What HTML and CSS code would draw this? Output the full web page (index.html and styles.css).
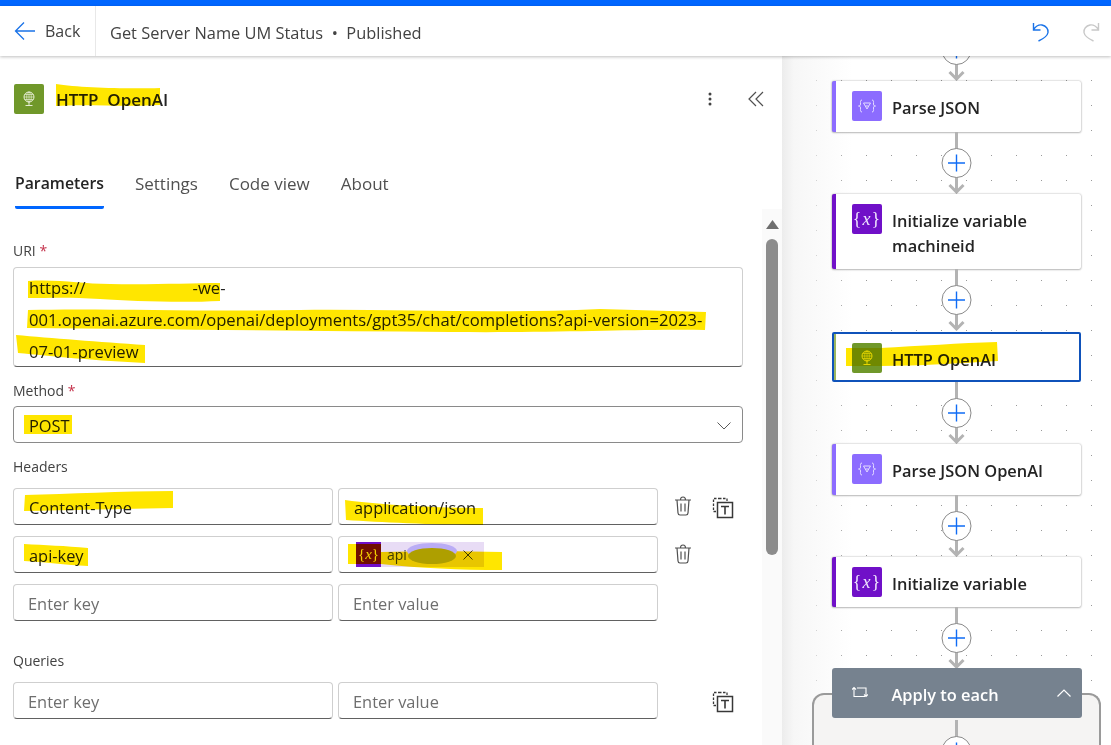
FILE: index.html
```html
<!DOCTYPE html>
<html lang="en">
<head>
    <meta charset="UTF-8">
    <meta name="viewport" content="width=device-width, initial-scale=1.0">
    <title>Get Server Name UM Status</title>
    <link rel="stylesheet" href="styles.css">
</head>
<body>
    <svg class="defs" width="0" height="0">
        <symbol id="connector" viewBox="0 0 31 62">
            <path d="M15.500 0V59" stroke="#b3b3b3" stroke-width="3"/>
            <path d="M8.500 53L15.500 60L22.500 53" fill="none" stroke="#b3b3b3" stroke-width="3"/>
            <circle cx="15.500" cy="31" r="14.500" fill="#fff" stroke="#8a8a8a"/>
            <path d="M7 31H24M15.500 22.500V39.500" stroke="#0f6cf5" stroke-width="1.400"/>
        </symbol>
        <symbol id="braces-filter" viewBox="0 0 30 30">
            <path d="M10 9C8 9 8.500 11 8.500 13C8.500 14.500 8 15 6.500 15C8 15 8.500 15.500 8.500 17C8.500 19 8 21 10 21M20 9C22 9 21.500 11 21.500 13C21.500 14.500 22 15 23.500 15C22 15 21.500 15.500 21.500 17C21.500 19 22 21 20 21" fill="none" stroke="#e4dcff"/>
            <path d="M11.500 12H18.500L15 18Z" fill="none" stroke="#e4dcff"/>
            <path d="M13.500 15H16.500" stroke="#e4dcff"/>
        </symbol>
        <symbol id="globe" viewBox="0 0 30 30">
            <circle cx="15" cy="13" r="5" fill="none" stroke="#f3f6e6" stroke-width=".9"/>
            <path d="M10 13H20M15 8V18M10.800 10.500H19.200M10.800 15.500H19.200" stroke="#f3f6e6" stroke-width=".6"/>
            <ellipse cx="15" cy="13" rx="2.300" ry="5" fill="none" stroke="#f3f6e6" stroke-width=".6"/>
            <path d="M15 18V21M11.500 21.500H18.500" stroke="#f3f6e6" stroke-width=".9"/>
        </symbol>
        <symbol id="trash" viewBox="0 0 18 20">
            <path d="M1 4H17M6.500 4C6.500 1.500 7.500 1 9 1C10.500 1 11.500 1.500 11.500 4M3 4L4 17C4.100 18.300 5 19 6 19H12C13 19 13.900 18.300 14 17L15 4M7 7.500V15.500M11 7.500V15.500" fill="none" stroke="#505050" stroke-width="1.200"/>
        </symbol>
        <symbol id="copy-text" viewBox="0 0 22 22">
            <path d="M7 1.500H15V4M1.500 13V1.500H7M1.500 14.500H5" fill="none" stroke="#383838" stroke-width="1.300" stroke-dasharray="2.500 1.500"/>
            <rect x="5.500" y="5.500" width="15" height="15" fill="none" stroke="#383838" stroke-width="1.500"/>
            <path d="M9 9.500H17M13 9.500V17.500" fill="none" stroke="#383838" stroke-width="1.600"/>
        </symbol>
    </svg>

    <div class="top-strip"></div>

    <header class="command-bar">
        <div class="back">
            <svg class="back-icon" width="22" height="20" viewBox="0 0 22 20"><path d="M21 10H2M10 1.500L1.500 10L10 18.500" fill="none" stroke="#1a73e8" stroke-width="1.300"/></svg>
            <span>Back</span>
        </div>
        <div class="flow-title">Get Server Name UM Status &nbsp;•&nbsp; Published</div>
        <div class="history">
            <svg width="18" height="20" viewBox="0 0 18 20"><path d="M1.500 1V8H8.500M1.500 7.500C4 4 7 2.500 10 3C14 3.800 16.500 7 16 10.500C15.600 13 13 16 6.500 19" fill="none" stroke="#1a73e8" stroke-width="1.400"/></svg>
            <svg width="18" height="20" viewBox="0 0 18 20"><path d="M16.500 1V8H9.500M16.500 7.500C14 4 11 2.500 8 3C4 3.800 1.500 7 2 10.500C2.400 13 5 16 11.500 19" fill="none" stroke="#c8c8c8" stroke-width="1.400"/></svg>
        </div>
    </header>

    <main class="workspace">
        <section class="panel">
            <div class="panel-head">
                <span class="node-icon http panel-icon"><svg width="30" height="30"><use href="#globe"/></svg></span>
                <h1 class="panel-title">HTTP&nbsp; OpenAI</h1>
                <svg class="kebab" width="4" height="14" viewBox="0 0 4 14"><circle cx="2" cy="2" r="1.500"/><circle cx="2" cy="7" r="1.500"/><circle cx="2" cy="12" r="1.500"/></svg>
                <svg class="collapse" width="16" height="16" viewBox="0 0 16 16"><path d="M8 1L1 8L8 15M15 1L8 8L15 15" fill="none" stroke="#505050" stroke-width="1.200"/></svg>
            </div>

            <nav class="tabs">
                <span class="tab active">Parameters</span>
                <span class="tab">Settings</span>
                <span class="tab">Code view</span>
                <span class="tab">About</span>
            </nav>

            <div class="panel-body">
                <form class="params">
                    <div class="label">URI <span class="req">*</span></div>
                    <div class="field uri">
                        <div>https://<span class="redacted"></span>-we-</div>
                        <div>001.openai.azure.com/openai/deployments/gpt35/chat/completions?api-version=2023-</div>
                        <div>07-01-preview</div>
                    </div>

                    <div class="label method-label">Method <span class="req">*</span></div>
                    <div class="field select">
                        <span>POST</span>
                        <svg width="14" height="8" viewBox="0 0 14 8"><path d="M.5 .5L7 7L13.500 .5" fill="none" stroke="#5a5a5a"/></svg>
                    </div>

                    <div class="label headers-label">Headers</div>
                    <div class="kv-row">
                        <div class="field">Content-Type</div>
                        <div class="field">application/json</div>
                        <svg class="row-icon" width="18" height="20"><use href="#trash"/></svg>
                        <svg class="row-icon copy" width="22" height="22"><use href="#copy-text"/></svg>
                    </div>
                    <div class="kv-row">
                        <div class="field">api-key</div>
                        <div class="field">
                            <span class="token">
                                <span class="token-icon">{<i>x</i>}</span>
                                <span class="token-name">api</span>
                                <svg width="10" height="10" viewBox="0 0 10 10"><path d="M.5 .5L9.500 9.500M9.500 .5L.5 9.500" stroke="#424242"/></svg>
                            </span>
                        </div>
                        <svg class="row-icon" width="18" height="20"><use href="#trash"/></svg>
                    </div>
                    <div class="kv-row">
                        <div class="field empty">Enter key</div>
                        <div class="field empty">Enter value</div>
                    </div>

                    <div class="label queries-label">Queries</div>
                    <div class="kv-row">
                        <div class="field empty">Enter key</div>
                        <div class="field empty">Enter value</div>
                        <svg class="row-icon queries-copy" width="22" height="22"><use href="#copy-text"/></svg>
                    </div>
                </form>

                <div class="scrollbar">
                    <svg width="13" height="9" viewBox="0 0 13 9"><path d="M6.500 0L13 9H0Z" fill="#6e6e6e"/></svg>
                    <div class="thumb"></div>
                </div>
            </div>
        </section>

        <section class="canvas">
            <svg class="connector first" width="31" height="62"><use href="#connector"/></svg>

            <div class="node parse">
                <span class="node-icon filter"><svg width="30" height="30"><use href="#braces-filter"/></svg></span>
                <span>Parse JSON</span>
            </div>
            <svg class="connector" width="31" height="62"><use href="#connector"/></svg>

            <div class="node variable tall">
                <span class="node-icon var">{<i>x</i>}</span>
                <span>Initialize variable<br>machineid</span>
            </div>
            <svg class="connector" width="31" height="62"><use href="#connector"/></svg>

            <div class="node selected">
                <span class="node-icon http"><svg width="30" height="30"><use href="#globe"/></svg></span>
                <span>HTTP OpenAI</span>
            </div>
            <svg class="connector" width="31" height="62"><use href="#connector"/></svg>

            <div class="node parse">
                <span class="node-icon filter"><svg width="30" height="30"><use href="#braces-filter"/></svg></span>
                <span>Parse JSON OpenAI</span>
            </div>
            <svg class="connector" width="31" height="62"><use href="#connector"/></svg>

            <div class="node variable last">
                <span class="node-icon var">{<i>x</i>}</span>
                <span>Initialize variable</span>
            </div>
            <svg class="connector" width="31" height="62"><use href="#connector"/></svg>

            <div class="scope-head">
                <svg class="loop" width="16" height="14" viewBox="0 0 16 14"><path d="M0 3.500L2 1.500L4 3.500M2 1.500V10.500H13M16 8.500L14 10.500L12 8.500M14 10.500V2H5" fill="none" stroke="#fff" stroke-width="1.100"/></svg>
                <span class="scope-name">Apply to each</span>
                <svg class="scope-chevron" width="14" height="8" viewBox="0 0 14 8"><path d="M.5 7.500L7 1L13.500 7.500" fill="none" stroke="#fff" stroke-width="1.200"/></svg>
            </div>
            <div class="scope-body">
                <svg class="connector" width="31" height="62"><use href="#connector"/></svg>
            </div>
        </section>
    </main>

    <!-- yellow marker someone drew over the screenshot -->
    <svg class="marker" width="1111" height="745" viewBox="0 0 1111 745">
        <g fill="#ffe600">
            <path d="M56 84C80 88 130 89 160 88L160 105C130 107 80 104 56 106Z"/>
            <path d="M28 281C60 279 80 284 110 284C150 285 190 283 220 283L220 301C180 303 130 301 100 299C70 297 50 298 28 298Z"/>
            <path d="M28 310C100 308 200 312 300 310C400 309 500 314 600 309L706 312L705 330C640 329 560 333 450 332C300 331 150 329 27 328Z"/>
            <path d="M16 335C50 338 100 342 145 345L145 363C100 361 50 356 18 353Z"/>
            <path d="M24 415H72V434H24Z"/>
            <path d="M25 495C70 494 120 491 173 491L173 508C120 509 70 510 24 511Z"/>
            <path d="M345 500C380 505 440 508 483 508L483 525C430 525 380 522 346 520Z"/>
            <path d="M24 544C45 545 65 546 88 548L88 566C65 565 45 562 24 561Z"/>
            <path d="M348 544H381V552C420 551 460 551 502 552V570C460 570 420 568 381 564H348Z"/>
            <path d="M846 348H880C920 346 960 343 997 342L998 361C960 363 920 366 880 366H846Z"/>
        </g>
        <ellipse cx="432" cy="551" rx="25" ry="8" fill="#cdc8ff"/>
        <ellipse cx="432" cy="556" rx="24" ry="8" fill="#c0b800"/>
    </svg>
</body>
</html>
```

FILE: styles.css
```css
* {
    box-sizing: border-box;
}

html, body {
    margin: 0;
    height: 745px;
    overflow: hidden;
}

body {
    position: relative;
    font-family: "Open Sans", "Noto Sans", sans-serif;
    font-size: 15px;
    color: #242424;
    background: white;
    display: flex;
    flex-direction: column;
}

.defs {
    position: absolute;
}

.top-strip {
    height: 6px;
    background-color: #0066ff;
}

/* header */
.command-bar {
    height: 50px;
    display: flex;
    align-items: center;
    background: white;
    box-shadow: 0 1px 3px rgba(0, 0, 0, 0.25);
    position: relative;
    z-index: 2;
    font-size: 16px;
    color: #424242;
}

.back {
    width: 96px;
    height: 100%;
    padding-left: 14px;
    display: flex;
    align-items: center;
    gap: 9px;
    border-right: 1px solid #e8e8e8;
}

.flow-title {
    margin-left: 14px;
    flex: 1;
    font-size: 16.4px;
    padding-top: 2px;
}

.history {
    display: flex;
    gap: 32px;
    padding-right: 11px;
    margin-top: 1px;
}

/* main */
.workspace {
    flex: 1;
    display: flex;
    min-height: 0;
}

.panel {
    width: 782px;
    flex-shrink: 0;
    background: white;
}

.panel-head {
    height: 28px;
    margin-top: 29px;
    display: flex;
    align-items: center;
    padding-left: 14px;
}

.node-icon {
    width: 30px;
    height: 30px;
    border-radius: 2px;
    flex-shrink: 0;
    display: block;
}

.http {
    background-color: #70982a;
}

.filter {
    background-color: #8c6cff;
}

.var {
    background-color: #7010c8;
    color: #f0e6ff;
    font-family: "Liberation Serif", serif;
    font-size: 18px;
    font-weight: 400;
    line-height: 30px;
    letter-spacing: 1px;
    text-align: center;
}

.panel-title {
    margin: 0 0 0 12px;
    font-size: 17px;
    font-weight: 600;
    flex: 1;
}

.kebab {
    fill: #424242;
    margin-right: 36px;
}

.collapse {
    margin-right: 18px;
}

.tabs {
    display: flex;
    gap: 31px;
    padding-left: 15px;
    margin-top: 56px;
    font-size: 17px;
    color: #505050;
}

.tab {
    height: 40px;
    padding-top: 3px;
}

.tab.active {
    font-size: 15.8px;
    line-height: 23px;
    font-weight: 600;
    color: #242424;
    border-bottom: 3px solid #0066ff;
    border-radius: 0 0 2px 2px;
}

.panel-body {
    display: flex;
    height: 536px;
}

.params {
    width: 762px;
    padding: 32px 0 0 13px;
}

.label {
    font-size: 14px;
    line-height: 20px;
    color: #424242;
    margin-bottom: 6px;
}

.req {
    color: #c4314b;
}

.field {
    width: 320px;
    height: 37px;
    padding: 2px 15px 0;
    display: flex;
    align-items: center;
    background: white;
    border: 1px solid #cfcfcf;
    border-bottom-color: #616161;
    border-radius: 4px;
    font-size: 16.4px;
}

.field.empty {
    padding-left: 14px;
    color: #6e6e6e;
}

.uri {
    width: 730px;
    height: 100px;
    padding: 4px 15px;
    display: block;
    font-size: 16.6px;
    line-height: 32px;
    white-space: nowrap;
}

.redacted {
    display: inline-block;
    width: 107px;
}

.method-label {
    margin-top: 14px;
    margin-bottom: 5px;
}

.select {
    width: 730px;
    justify-content: space-between;
    border-color: #8a8a8a;
    padding-right: 11px;
}

.headers-label {
    margin-top: 14px;
    margin-bottom: 11px;
}

.kv-row {
    display: flex;
    align-items: center;
    gap: 5px;
    margin-bottom: 11px;
}

.row-icon {
    margin-left: 11px;
    margin-top: -1px;
}

.row-icon.copy {
    margin-left: 15px;
    margin-top: 2px;
}

.queries-copy {
    margin-left: 49px;
    margin-top: 2px;
}

.queries-label {
    margin-top: 30px;
    margin-bottom: 11px;
}

.token {
    display: flex;
    align-items: center;
    width: 128px;
    height: 25px;
    margin-left: 2px;
    margin-top: -2px;
    background-color: #e8dcf5;
    font-size: 14px;
    color: #424242;
}

.token-icon {
    width: 25px;
    height: 25px;
    background-color: #7010c8;
    color: #f0e6ff;
    font-family: "Liberation Serif", serif;
    font-size: 15px;
    line-height: 24px;
    text-align: center;
}

.token-name {
    margin-left: 6px;
    width: 76px;
}

.scrollbar {
    width: 20px;
    background-color: #fafafa;
    padding: 0 4px;
    display: flex;
    flex-direction: column;
    align-items: center;
}

.scrollbar svg {
    margin-top: 11px;
}

.thumb {
    width: 12px;
    height: 316px;
    margin-top: 10px;
    background-color: #8c8c8c;
    border-radius: 6px;
}

/* flow canvas */
.canvas {
    flex: 1;
    overflow: hidden;
    display: flex;
    flex-direction: column;
    align-items: center;
    padding-left: 20px;
    background-image:
        linear-gradient(to right, #ececec, #f7f7f7 12px, rgba(255, 255, 255, 0) 70px),
        radial-gradient(circle, #999 0.6px, transparent 1px);
    background-size: 100% 100%, 25px 25px;
    background-position: 0 0, -3px -13px;
}

.connector {
    display: block;
    flex-shrink: 0;
}

.connector.first {
    margin-top: -37px;
}

.node {
    width: 249px;
    height: 51px;
    flex-shrink: 0;
    display: flex;
    align-items: flex-start;
    gap: 10px;
    padding: 10px 16px;
    background: white;
    border-radius: 2px;
    border-left: 4px solid #8c6cff;
    box-shadow: 0 0 2px rgba(0, 0, 0, 0.35), 0 1px 2px rgba(0, 0, 0, 0.2);
    font-size: 16.4px;
    font-weight: 600;
    line-height: 25px;
}

.node > span:last-child {
    margin-top: 4px;
}

.node.tall {
    height: 75px;
}

.node.last {
    height: 50px;
}

.node.variable {
    border-left-color: #7010c8;
}

.node.selected {
    height: 50px;
    margin-top: 1px;
    border: 2px solid #0f52ba;
    padding: 9px 16px 9px 18px;
    box-shadow: inset 2px 0 0 #9ab560;
}

.scope-head {
    width: 250px;
    height: 50px;
    flex-shrink: 0;
    margin-top: -1px;
    position: relative;
    z-index: 1;
    display: flex;
    align-items: center;
    padding-left: 20px;
    background-color: #76828f;
    border-radius: 3px;
    color: white;
    font-size: 16.4px;
    font-weight: 600;
}

.loop {
    margin-right: 24px;
}

.scope-name {
    margin-top: 2px;
}

.scope-chevron {
    margin-left: auto;
    margin-right: 11px;
}

.scope-body {
    width: 289px;
    flex: 1;
    flex-shrink: 0;
    min-height: 60px;
    margin-top: -25px;
    padding-top: 25px;
    display: flex;
    justify-content: center;
    background-color: #f5f4f3;
    border: 2px solid #9a9a9a;
    border-bottom: none;
    border-radius: 12px 12px 0 0;
}

/* marker overlay */
.marker {
    position: absolute;
    top: 0;
    left: 0;
    z-index: 3;
    pointer-events: none;
    mix-blend-mode: multiply;
}
```
